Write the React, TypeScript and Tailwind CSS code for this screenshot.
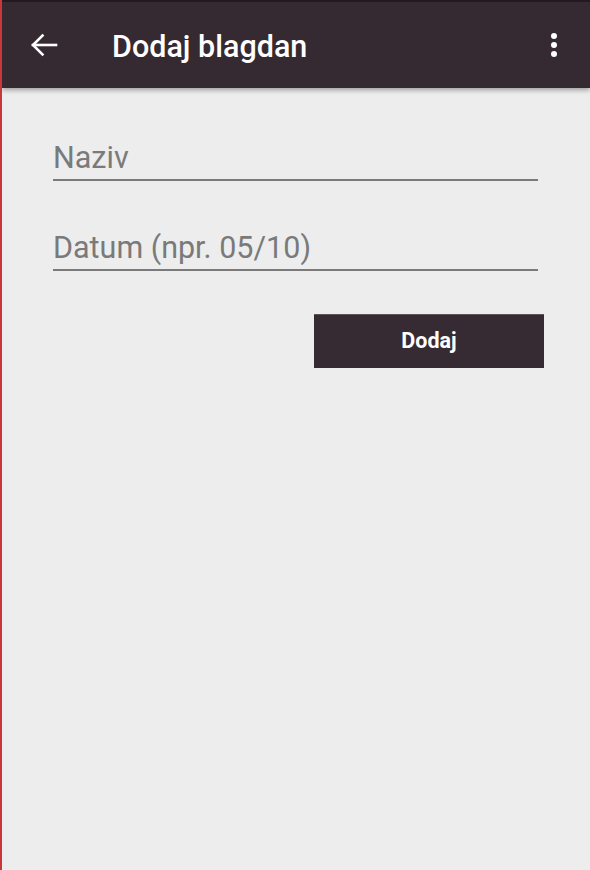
import React from "react";

export default function App() {
  return (
    <div className="w-[590px] h-[870px] bg-[#ededed] border-l-2 border-[#c8373b] flex flex-col overflow-hidden" style={{ fontFamily: "Roboto, 'Noto Sans', sans-serif" }}>
      <div className="h-[88px] bg-[#362a32] border-t-2 border-[#221a20] flex items-center shadow-[0_2px_5px_rgba(0,0,0,0.35)] relative z-10">
        <div className="w-[110px] pl-[28px] flex items-center">
          <svg width="28" height="24" viewBox="0 0 28 24" fill="none" stroke="white" strokeWidth="2.6" strokeLinecap="square">
            <path d="M26 12H3" />
            <path d="M12.5 2.5L3 12l9.5 9.5" />
          </svg>
        </div>
        <div className="flex-1 text-white text-[30.5px] font-medium pt-[3px]">Dodaj blagdan</div>
        <div className="w-[60px] flex flex-col items-center gap-[3px] pr-[12px]">
          <div className="w-[6px] h-[6px] rounded-full bg-white" />
          <div className="w-[6px] h-[6px] rounded-full bg-white" />
          <div className="w-[6px] h-[6px] rounded-full bg-white" />
        </div>
      </div>
      <div className="flex flex-col pl-[51px] pr-[44px] pt-[50px]">
        <div className="w-[485px] h-[43px] border-b-2 border-[#7a7a7a] text-[#7a7a7a] text-[30.5px] leading-[40px]">Naziv</div>
        <div className="w-[485px] h-[43px] mt-[47px] border-b-2 border-[#7a7a7a] text-[#7a7a7a] text-[30.5px] leading-[40px]">Datum (npr. 05/10)</div>
        <div className="flex justify-end mt-[43px] pr-[2px]">
          <div className="w-[230px] h-[54px] bg-[#372b33] border-t border-[#5e5258] flex items-center justify-center text-white text-[21.5px] font-bold">Dodaj</div>
        </div>
      </div>
    </div>
  );
}
